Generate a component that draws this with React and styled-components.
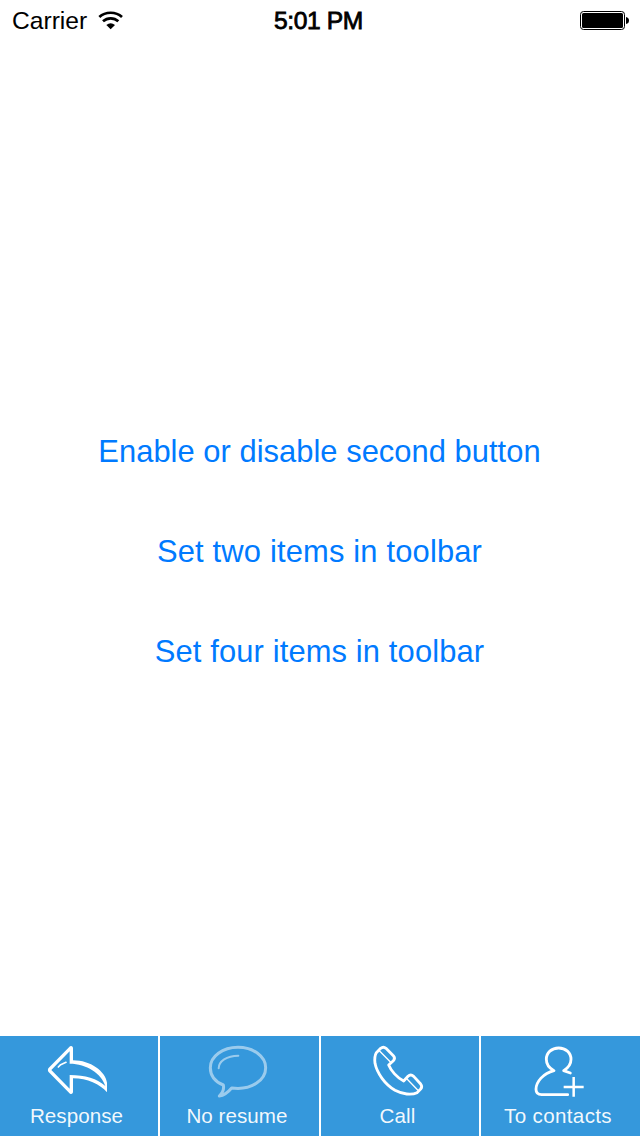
import React from "react";
import styled, { createGlobalStyle } from "styled-components";

const GlobalStyle = createGlobalStyle`
  * { box-sizing: border-box; }
  body { margin: 0; background: #fff; }
`;

const Screen = styled.div`
  width: 640px;
  height: 1136px;
  display: flex;
  flex-direction: column;
  overflow: hidden;
  background: #fff;
  font-family: "Liberation Sans", Arial, sans-serif;
`;

const StatusBar = styled.header`
  height: 40px;
  flex: none;
  display: grid;
  grid-template-columns: 1fr auto 1fr;
  align-items: center;
  padding: 0 11px 0 12px;
  color: #000;
  font-size: 24.6px;
  line-height: 38px;
`;

const Carrier = styled.div`
  display: flex;
  align-items: center;
  gap: 11px;
  padding-top: 2px;
`;

const Clock = styled.div`
  padding: 2px 4px 0 0;
  letter-spacing: -0.4px;
  -webkit-text-stroke: 0.8px #000;
`;

const Battery = styled.svg`
  justify-self: end;
`;

const Actions = styled.main`
  flex: 1;
  display: flex;
  flex-direction: column;
  align-items: center;
  gap: 40px;
  padding: 382px 1px 0 0;
`;

const LinkButton = styled.button`
  height: 60px;
  padding: 0;
  border: 0;
  background: none;
  color: #007aff;
  font: 30.9px/60px "Liberation Sans", Arial, sans-serif;
  letter-spacing: ${(p) => p.$spacing}px;
`;

const Toolbar = styled.nav`
  flex: none;
  height: 100px;
  display: grid;
  grid-template-columns: 158px 159px 158px 159px;
  gap: 2px;
  background: #fff;
`;

const ToolbarItem = styled.button`
  display: flex;
  flex-direction: column;
  padding: 4px 0 0;
  border: 0;
  background: #3598dc;
  color: rgba(255, 255, 255, 0.95);
`;

const ItemIcon = styled.svg`
  display: block;
  width: 100%;
  height: 60px;
  fill: none;
  stroke: #fff;
  stroke-width: 9;
  stroke-linecap: round;
  stroke-linejoin: round;
  opacity: ${(p) => (p.$dimmed ? 0.5 : 1)};
`;

const ItemLabel = styled.span`
  width: 100%;
  padding-right: 5px;
  text-align: center;
  font: 20.6px/32px "Liberation Sans", Arial, sans-serif;
  letter-spacing: ${(p) => p.$spacing}px;
`;

const items = [
  {
    label: "Response",
    spacing: 0.05,
    viewBox: "0 30 474 180",
    art: (
      <>
        <path
          fill="#fff"
          stroke="none"
          fillRule="evenodd"
          d="M219 91C272 91 316 124 321 158V187C300 163 262 145 219 145V187Q217 194 210 191L145 125Q142 120 145 115L210 49Q217 46 219 53ZM209 64L154 120L209 176V135C256 135 292 146 316 168C304 130 260 101 209 101Z"
        />
        <path strokeWidth="5" d="M175 111L182 104L198 97" />
      </>
    ),
  },
  {
    label: "No resume",
    spacing: 0.05,
    dimmed: true,
    viewBox: "15 30 477 180",
    art: (
      <>
        <path d="M205 165C178 154 166 135 166 113C166 79 203 52 249 52C295 52 332 79 332 113C332 149 291 182 230 174C220 186 208 196 193 198C203 188 208 178 205 165Z" />
        <path strokeWidth="6" d="M250 77C215 77 191 94 191 115" />
      </>
    ),
  },
  {
    label: "Call",
    spacing: 0.1,
    viewBox: "18 30 474 180",
    art: (
      <>
        <path strokeWidth="8.5" d="M184 68L197 55Q205 48 213 55L235 77Q242 85 235 92L221 105C228 122 246 143 266 153L279 139Q287 131 296 139L317 162Q323 170 317 177L306 188C290 196 262 193 240 181C210 163 186 130 180 100C178 85 180 75 184 68Z" />
        <path strokeWidth="4" d="M193 62L227 97M274 145L308 180" />
      </>
    ),
  },
  {
    label: "To contacts",
    spacing: 0.35,
    viewBox: "18 30 477 180",
    art: (
      <>
        <path strokeWidth="8.5" d="M286 129L266 122C280 114 288 103 288 88C288 68 272 54 251 54C230 54 214 68 214 88C214 102 223 115 237 122C205 130 183 155 183 178Q183 194 200 194H278" />
        <path strokeWidth="7.5" strokeLinecap="butt" d="M266 171H326M296 141V200" />
      </>
    ),
  },
];

export default function App() {
  return (
    <Screen>
      <GlobalStyle />
      <StatusBar>
        <Carrier>
          <span>Carrier</span>
          <svg width="26" height="20" viewBox="294 32 78 60" fill="none" stroke="#000" strokeWidth="8">
            <path d="M298 50C316 33 348 33 366 50" />
            <path d="M309 63C322 51 342 51 355 63" />
            <path d="M319 74Q332 63 345 74L332 87Z" fill="#000" stroke="none" />
          </svg>
        </Carrier>
        <Clock>5:01 PM</Clock>
        <Battery width="50" height="20" viewBox="0 0 50 20">
          <rect x="1.5" y="1.5" width="44" height="18" rx="3" fill="none" stroke="#000" />
          <rect x="3" y="3" width="41" height="15" rx="1.5" />
          <path d="M47 7Q50 7.5 50 10.5T47 14Z" />
        </Battery>
      </StatusBar>
      <Actions>
        <LinkButton $spacing={0.03}>Enable or disable second button</LinkButton>
        <LinkButton $spacing={0.17}>Set two items in toolbar</LinkButton>
        <LinkButton $spacing={0.13}>Set four items in toolbar</LinkButton>
      </Actions>
      <Toolbar>
        {items.map((item) => (
          <ToolbarItem key={item.label}>
            <ItemIcon viewBox={item.viewBox} $dimmed={item.dimmed}>
              {item.art}
            </ItemIcon>
            <ItemLabel $spacing={item.spacing}>{item.label}</ItemLabel>
          </ToolbarItem>
        ))}
      </Toolbar>
    </Screen>
  );
}
